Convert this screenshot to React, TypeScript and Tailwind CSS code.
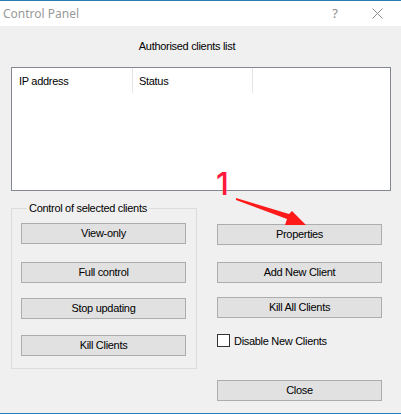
import React from 'react';

const ui = { fontFamily: '"Liberation Sans", Arial, sans-serif' };

function Btn({ label, className = '' }: { label: string; className?: string }) {
    return (
        <button
            className={`block w-[165px] h-[21px] bg-[#e1e1e1] border border-[#adadad] text-[11px] tracking-[-0.3px] text-black leading-none ${className}`}
        >
            {label}
        </button>
    );
}

export default function App() {
    return (
        <div className="relative w-[401px] h-[414px] flex flex-col border-t border-b border-[#2b7cb4] bg-[#f0f0f0]" style={ui}>
            {/* title bar */}
            <div className="h-[25px] bg-white flex items-center pl-[3px] pr-[18px]">
                <span className="text-[12px] text-[#999999]" style={{ fontFamily: '"Noto Sans", "Open Sans", sans-serif' }}>
                    Control Panel
                </span>
                <span className="ml-auto mr-[34px] text-[13px] text-[#8c8c8c]" style={{ fontFamily: '"Noto Sans", sans-serif' }}>?</span>
                <svg width="11" height="11" viewBox="0 0 11 11" className="text-[#8c8c8c]">
                    <path d="M0.5 0.5 L10.5 10.5 M10.5 0.5 L0.5 10.5" stroke="currentColor" strokeWidth="1" />
                </svg>
            </div>

            {/* body */}
            <div className="flex-1 flex flex-col px-[11px]">
                <p className="mt-[12px] text-center text-[11px] tracking-[-0.3px] text-black pr-[27px]">Authorised clients list</p>

                <div className="mt-[12px] h-[124px] w-[380px] border border-[#828790] bg-white">
                    <div className="flex h-[25px] text-[11px] tracking-[-0.3px] text-black">
                        <div className="w-[121px] pl-[7px] pt-[5px] border-r border-[#e5e5e5]">IP address</div>
                        <div className="w-[120px] pl-[6px] pt-[5px] border-r border-[#e5e5e5]">Status</div>
                    </div>
                </div>

                <div className="flex mt-[11px]">
                    <fieldset className="w-[186px] h-[167px] border border-[#dcdcdc] px-[9px] pb-0">
                        <legend className="ml-[6px] px-[2px] text-[11px] tracking-[-0.3px] text-black leading-[13px]">
                            Control of selected clients
                        </legend>
                        <Btn label="View-only" className="mt-[8px]" />
                        <Btn label="Full control" className="mt-[18px]" />
                        <Btn label="Stop updating" className="mt-[15px]" />
                        <Btn label="Kill Clients" className="mt-[16px]" />
                    </fieldset>

                    <div className="ml-[20px] pt-[22px] flex flex-col">
                        <Btn label="Properties" />
                        <Btn label="Add New Client" className="mt-[17px]" />
                        <Btn label="Kill All Clients" className="mt-[14px]" />
                        <label className="mt-[15px] flex items-center gap-[4px] text-[11px] tracking-[-0.3px] text-black">
                            <span className="w-[13px] h-[13px] border border-[#333333] bg-white"></span>
                            Disable New Clients
                        </label>
                        <Btn label="Close" className="mt-[31px]" />
                    </div>
                </div>
            </div>

            {/* annotation */}
            <span
                className="absolute left-[216px] top-[167px] text-[31px] font-medium text-[#ff1a3c] leading-none"
                style={{ fontFamily: 'Inter, "Liberation Sans", sans-serif' }}
            >
                1
            </span>
            <svg className="absolute left-0 top-0 pointer-events-none" width="401" height="414">
                <polygon
                    points="236,197 289,213 292,210 306,224 285,224 287,218 236,199"
                    fill="#ff1a1a"
                />
            </svg>
        </div>
    );
}
